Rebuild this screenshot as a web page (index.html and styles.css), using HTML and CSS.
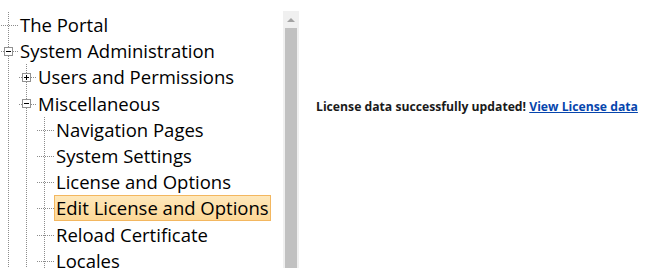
FILE: index.html
```html
<!DOCTYPE html>
<html lang="en">
<head>
    <meta charset="UTF-8">
    <title>License and Options</title>
    <link rel="stylesheet" href="styles.css">
</head>
<body>

    <div class="page">
        <!-- navigation tree -->
        <div class="side">
            <ul class="tree">
                <li><div class="row"><span class="twig"></span><span class="label">The Portal</span></div></li>
                <li>
                    <div class="row"><span class="twig"><span class="box minus"></span></span><span class="label">System Administration</span></div>
                    <ul>
                        <li><div class="row"><span class="twig"><span class="box plus"></span></span><span class="label">Users and Permissions</span></div></li>
                        <li>
                            <div class="row"><span class="twig"><span class="box minus"></span></span><span class="label">Miscellaneous</span></div>
                            <ul>
                                <li><div class="row"><span class="twig"></span><span class="label">Navigation Pages</span></div></li>
                                <li><div class="row"><span class="twig"></span><span class="label">System Settings</span></div></li>
                                <li><div class="row"><span class="twig"></span><span class="label">License and Options</span></div></li>
                                <li><div class="row"><span class="twig"></span><span class="label selected">Edit License and Options</span></div></li>
                                <li><div class="row"><span class="twig"></span><span class="label">Reload Certificate</span></div></li>
                                <li><div class="row"><span class="twig"></span><span class="label">Locales</span></div></li>
                            </ul>
                        </li>
                    </ul>
                </li>
            </ul>
        </div>

        <!-- fake scrollbar -->
        <div class="scrollbar">
            <div class="arrow"></div>
            <div class="thumb"></div>
        </div>

        <div class="main">
            <p class="message">License data successfully updated! <a href="#">View License data</a></p>
        </div>
    </div>

</body>
</html>
```

FILE: styles.css
```css
body {
    margin: 0;
    font-family: "Open Sans", "Noto Sans", sans-serif;
    background: #fff;
    color: #000;
}
.page {
    display: flex;
    height: 268px;
    overflow: hidden;
}
.side {
    width: 283px;
    padding-top: 12px;
}
.tree, .tree ul {
    list-style: none;
    margin: 0;
    padding: 0;
    background-image: linear-gradient(#8c8c8c 50%, transparent 50%);
    background-size: 1px 2px;
    background-repeat: repeat-y;
    background-position: 8px 0;
}
.tree {
    background-position: 8px 14px;
}
.tree ul {
    padding-left: 18px;
    background-position: 26px 0;
}
.row {
    display: flex;
    align-items: center;
    height: 26.2px;
}
.twig {
    width: 20px;
    height: 26px;
    flex: none;
    display: flex;
    align-items: center;
    background-image: linear-gradient(90deg, #8c8c8c 50%, transparent 50%);
    background-size: 2px 1px;
    background-repeat: repeat-x;
    background-position: 9px 13px;
    background-clip: content-box;
    padding-right: 1px;
    box-sizing: border-box;
}
.box {
    width: 9px;
    height: 9px;
    margin-left: 4px;
    border: 1px solid #919191;
    box-sizing: border-box;
    background: #fff;
    display: flex;
    align-items: center;
    justify-content: center;
}
.box::before {
    content: "";
    width: 5px;
    height: 1px;
    background: #000;
}
.box.plus {
    background: linear-gradient(#000, #000) center / 1px 5px no-repeat, #fff;
}
.label {
    font-size: 18.5px;
    line-height: 24px;
    padding: 0 1px;
    border: 1px solid transparent;
    white-space: nowrap;
    margin-left: -2px;
}
.label.selected {
    background: linear-gradient(#fee8bb, #fdd897);
    border-color: #f3b760;
}
.scrollbar {
    width: 16px;
    margin-top: 11px;
    background: #f0f0f0;
    display: flex;
    flex-direction: column;
    align-items: center;
    flex: none;
}
.arrow {
    margin-top: 7px;
    width: 0;
    height: 0;
    border-left: 4px solid transparent;
    border-right: 4px solid transparent;
    border-bottom: 4px solid #a3a3a3;
}
.thumb {
    margin-top: 6px;
    width: 12px;
    flex: 1;
    background: #c1c1c1;
}
.main {
    flex: 1;
    padding-left: 17px;
}
.message {
    margin: 98px 0 0;
    font-size: 12.2px;
    font-weight: bold;
    color: #1a1a1a;
}
.message a {
    color: #0645ad;
}
```
